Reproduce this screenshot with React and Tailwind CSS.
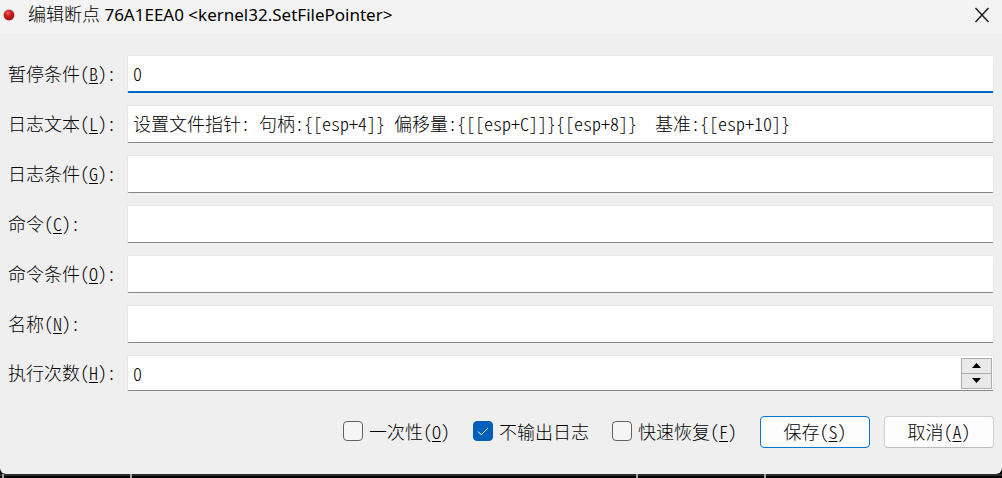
import { useState } from "react";

const fields = [
  { id: "break", label: "暂停条件", mnemonic: "B", value: "0", active: true },
  {
    id: "logText",
    label: "日志文本",
    mnemonic: "L",
    value: "设置文件指针: 句柄:{[esp+4]} 偏移量:{[[esp+C]]}{[esp+8]}  基准:{[esp+10]}",
  },
  { id: "logCondition", label: "日志条件", mnemonic: "G", value: "" },
  { id: "command", label: "命令", mnemonic: "C", value: "" },
  { id: "commandCondition", label: "命令条件", mnemonic: "O", value: "" },
  { id: "name", label: "名称", mnemonic: "N", value: "" },
];

function Caption({ text, mnemonic, colon }) {
  return (
    <span className="pb-0.5 whitespace-nowrap">
      {text}
      {mnemonic && (
        <>
          (<u className="decoration-1 underline-offset-2">{mnemonic}</u>)
        </>
      )}
      {colon && ":"}
    </span>
  );
}

function TextRow({ id, label, mnemonic, value, active }) {
  return (
    <div className="flex items-center">
      <label htmlFor={id} className="flex w-[119px] shrink-0">
        <Caption text={label} mnemonic={mnemonic} colon />
      </label>
      <input
        id={id}
        type="text"
        defaultValue={value}
        className={`h-[38px] min-w-0 flex-1 rounded-xs border border-[#e8e8e8] bg-white px-[5px] pb-0.5 outline-none ${
          active ? "border-b-2 border-b-[#0067c0]" : "border-b-[#868686]"
        }`}
      />
    </div>
  );
}

function Check({ id, text, mnemonic, checked }) {
  return (
    <label htmlFor={id} className="flex items-center gap-1.5">
      <span className="mb-0.5 grid size-5 place-items-center">
        <input
          id={id}
          type="checkbox"
          defaultChecked={checked}
          className="peer col-start-1 row-start-1 size-5 appearance-none rounded-sm border border-[#626262] bg-[#f5f5f5] checked:border-[#005fb8] checked:bg-[#005fb8]"
        />
        <svg
          viewBox="0 0 20 20"
          className="pointer-events-none invisible col-start-1 row-start-1 size-5 peer-checked:visible"
          fill="none"
          stroke="white"
          strokeWidth="1"
        >
          <path d="M5 10.5 L8.3 13.8 L15 7" />
        </svg>
      </span>
      <Caption text={text} mnemonic={mnemonic} />
    </label>
  );
}

export default function App() {
  const [hits, setHits] = useState(0);
  return (
    <div className="flex min-h-screen flex-col bg-black font-['Noto_Sans_CJK_SC',sans-serif] text-[18px] leading-6 font-light text-black [font-feature-settings:'hwid']">
      <div className="flex flex-1 flex-col rounded-b-md bg-[#efefef]">
        <header className="flex h-[33px] items-center bg-[#f3f3f3] pr-3 pl-[3px]">
          <svg viewBox="0 0 12 12" className="mb-1 size-3">
            <defs>
              <radialGradient id="dot" cx="0.4" cy="0.3" r="0.7">
                <stop offset="0" stopColor="#ec6a64" />
                <stop offset="0.45" stopColor="#c91d1d" />
                <stop offset="1" stopColor="#9c1414" />
              </radialGradient>
            </defs>
            <circle cx="6" cy="6" r="6" fill="#b03030" opacity="0.25" />
            <circle cx="6" cy="6" r="5.2" fill="url(#dot)" />
          </svg>
          <h1 className="mb-1 ml-[13px] flex-1 font-['Noto_Sans','Noto_Sans_CJK_SC',sans-serif] font-normal whitespace-pre">
            <span className="font-light">编辑断点</span>
            <span className="text-[17px]"> 76A1EEA0 &lt;kernel32.SetFilePointer&gt;</span>
          </h1>
          <button type="button" aria-label="关闭" className="mb-1">
            <svg viewBox="0 0 16 16" className="size-4" fill="none" stroke="#1a1a1a" strokeWidth="1.4">
              <path d="M1.5 1 L14.5 15 M14.5 1 L1.5 15" />
            </svg>
          </button>
        </header>

        <form className="flex flex-col gap-3 px-2 pt-[22px] pb-[26px]" onSubmit={(e) => e.preventDefault()}>
          {fields.map((f) => (
            <TextRow key={f.id} {...f} />
          ))}

          <div className="flex items-center">
            <label htmlFor="hits" className="flex w-[119px] shrink-0">
              <Caption text="执行次数" mnemonic="H" colon />
            </label>
            <div className="flex h-9 min-w-0 flex-1 items-center rounded-xs border border-[#e8e8e8] border-b-[#868686] bg-white pr-px pl-[5px]">
              <input
                id="hits"
                type="number"
                value={hits}
                onChange={(e) => setHits(Number(e.target.value))}
                className="min-w-0 flex-1 bg-transparent outline-none [appearance:textfield]"
              />
              <div className="flex h-[31px] w-[31px] flex-col divide-y divide-[#adadad] border border-[#adadad] bg-[#e9e9e9]">
                <button
                  type="button"
                  aria-label="增加"
                  onClick={() => setHits(hits + 1)}
                  className="grid flex-1 place-items-center"
                >
                  <svg viewBox="0 0 9 5" className="h-[5px] w-[9px]">
                    <path d="M4.5 0 L9 5 H0 Z" />
                  </svg>
                </button>
                <button
                  type="button"
                  aria-label="减少"
                  onClick={() => setHits(Math.max(0, hits - 1))}
                  className="grid flex-1 place-items-center"
                >
                  <svg viewBox="0 0 9 5" className="h-[5px] w-[9px]">
                    <path d="M4.5 5 L9 0 H0 Z" />
                  </svg>
                </button>
              </div>
            </div>
          </div>

          <div className="flex items-center justify-end gap-[23px] pt-[13px]">
            <Check id="once" text="一次性" mnemonic="O" />
            <Check id="silent" text="不输出日志" checked />
            <Check id="fast" text="快速恢复" mnemonic="F" />
            <div className="flex gap-3.5">
              <button
                type="submit"
                className="flex h-8 w-[110px] items-center justify-center rounded-sm border border-[#0078d4] bg-[#fdfdfd]"
              >
                <Caption text="保存" mnemonic="S" />
              </button>
              <button
                type="button"
                className="flex h-8 w-[110px] items-center justify-center rounded-sm border border-[#d0d0d0] border-b-[#bcbcbc] bg-[#fdfdfd]"
              >
                <Caption text="取消" mnemonic="A" />
              </button>
            </div>
          </div>
        </form>
      </div>
      <div className="flex h-1 border-t-2 border-[#2b2b2b] pl-0.5">
        <i className="-mt-0.5 w-[128px] border-l-2 border-[#a0a0a0]" />
        <i className="-mt-0.5 w-[506px] border-l-2 border-[#a0a0a0]" />
        <i className="-mt-0.5 w-[128px] border-l-2 border-[#a0a0a0]" />
        <i className="-mt-0.5 flex-1 border-l-2 border-[#a0a0a0]" />
      </div>
    </div>
  );
}
